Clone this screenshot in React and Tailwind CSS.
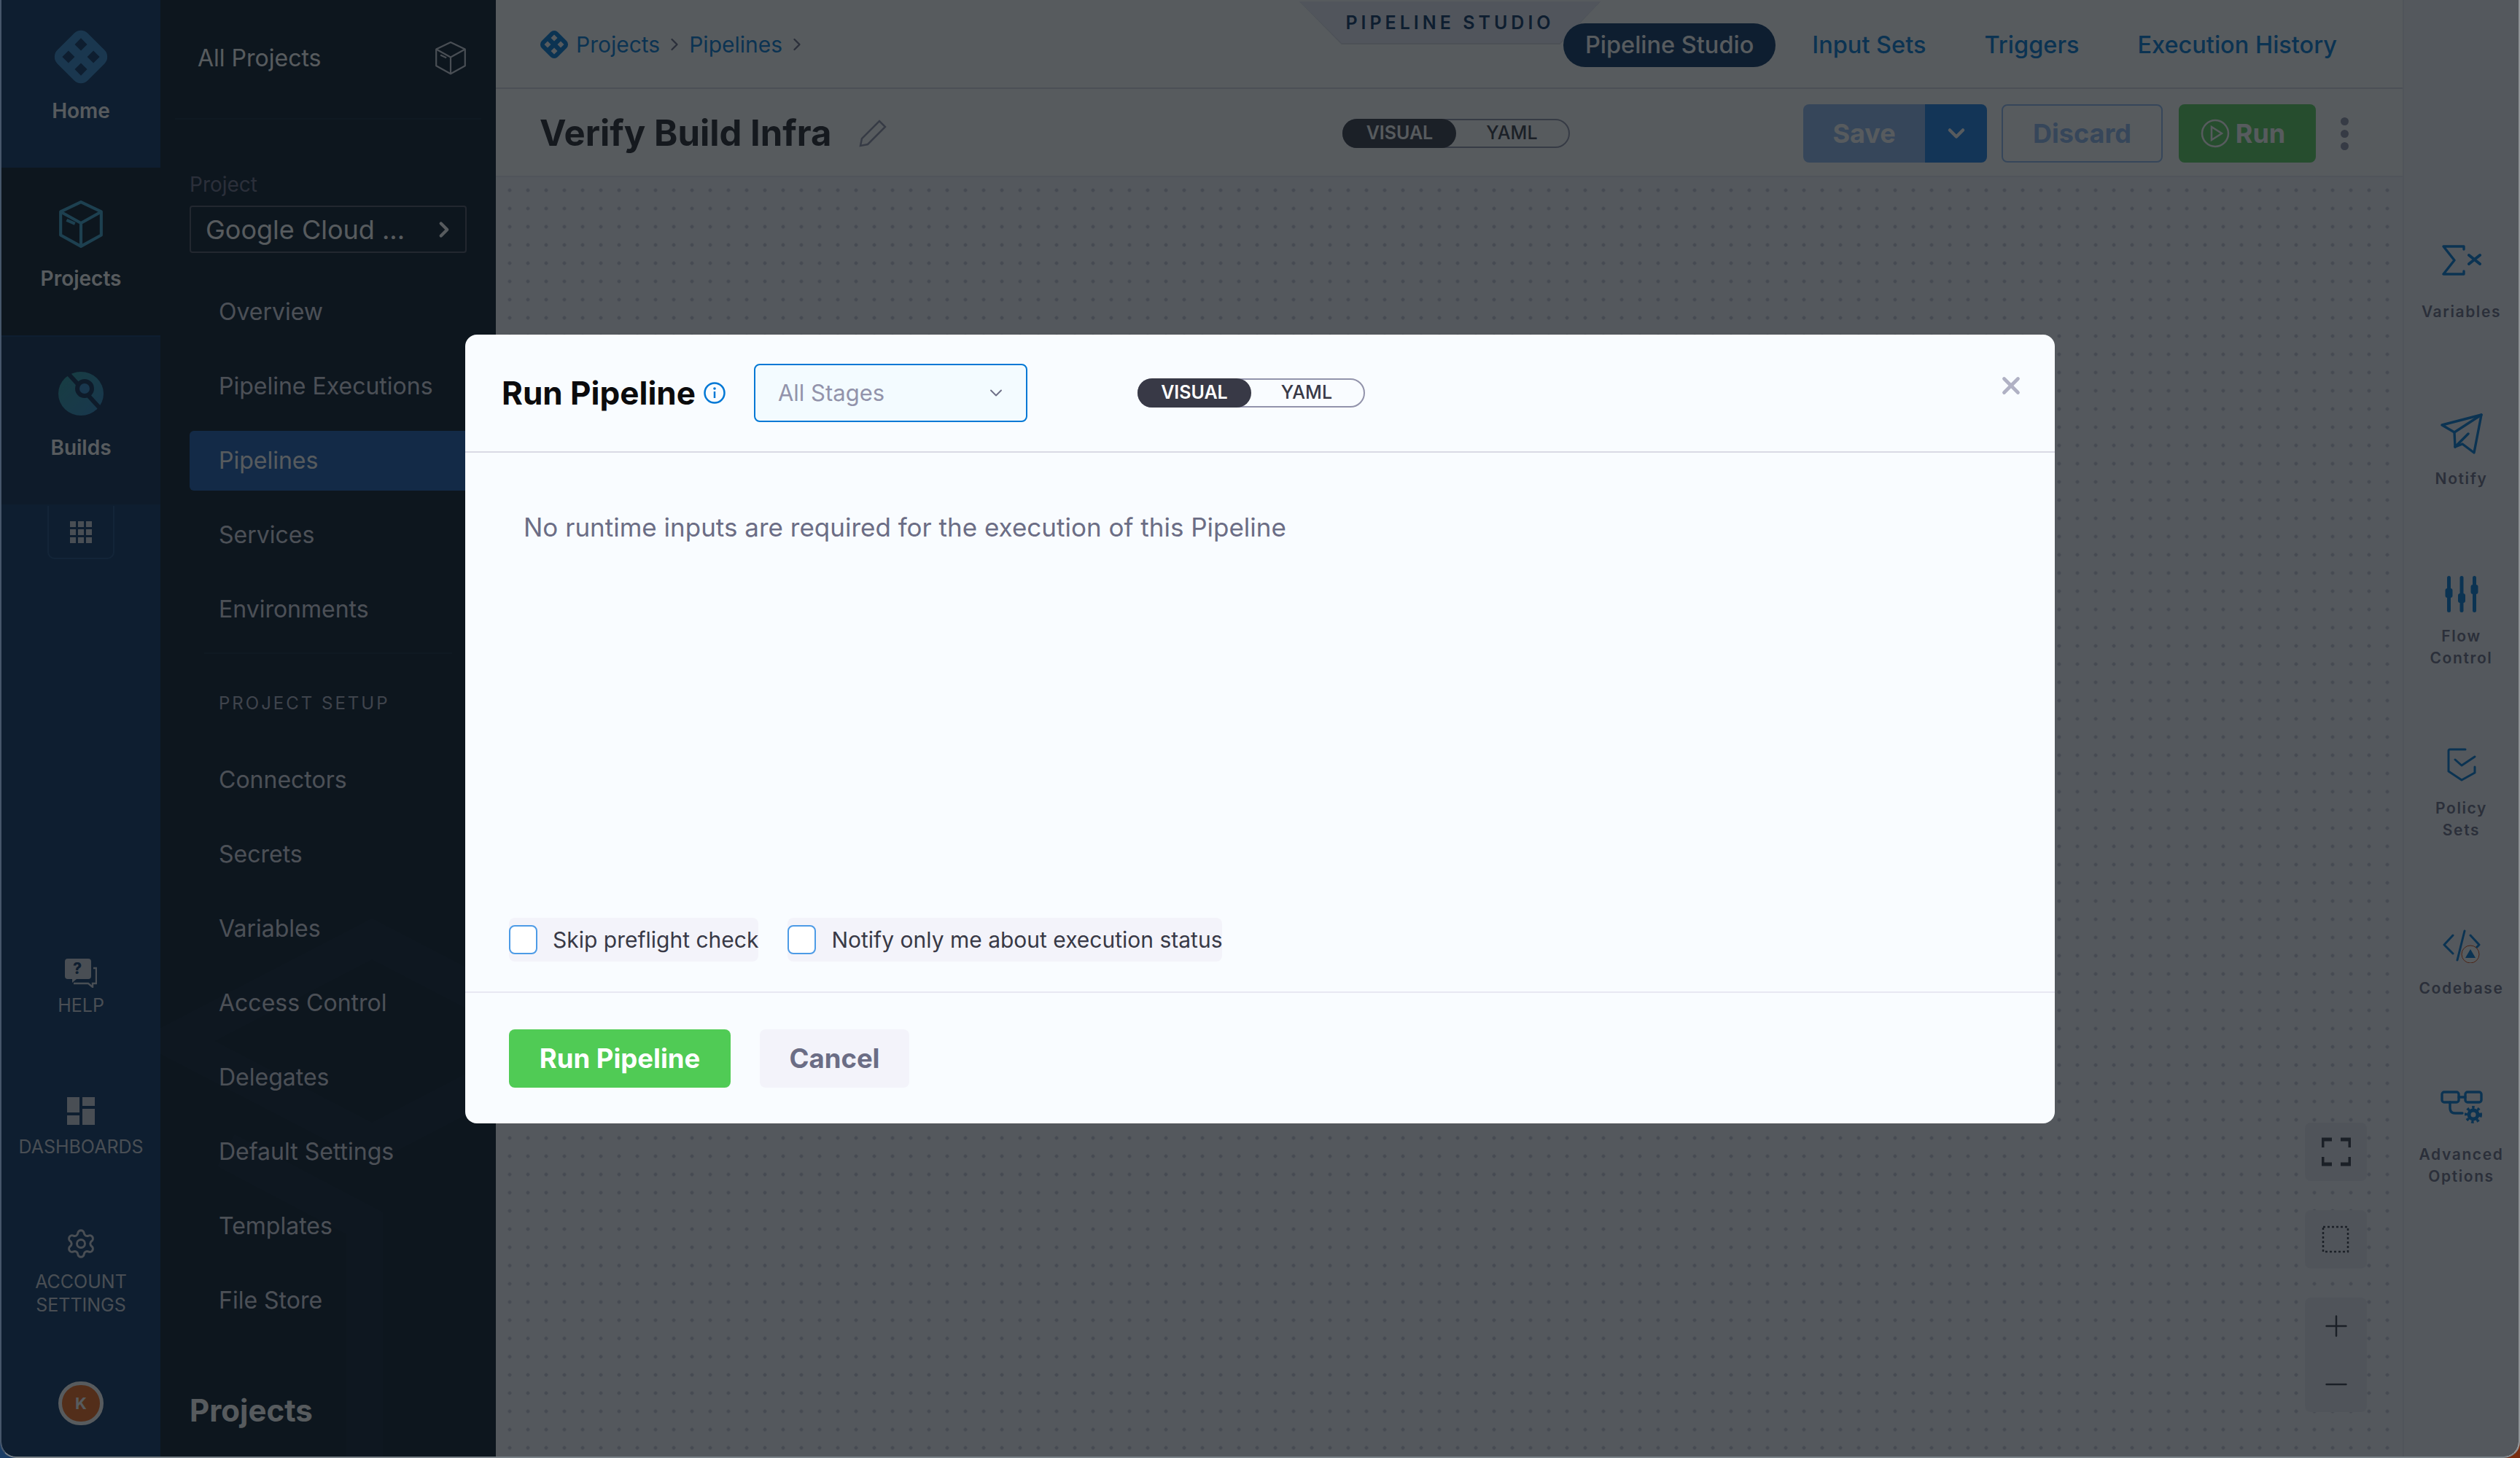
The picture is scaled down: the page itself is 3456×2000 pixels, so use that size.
import { ChevronRight, ChevronDown, Settings, Plus, Minus, X } from "lucide-react";

const NAV_TOP = [
  { label: "Home", cls: "h-[230px] bg-[#0a3364]", icon: <HarnessLogo className="w-[76px] h-[76px] text-[#3488cc]" hole="#0a3364" /> },
  { label: "Projects", cls: "h-[232px] bg-[#07182b] border-b-2 border-[#0a3364]", icon: <CubeIcon className="w-[62px] h-[66px] text-[#3fa5cf]" /> },
  { label: "Builds", cls: "h-[232px] bg-[#0a2a50] border-b-2 border-[#0a3364]", icon: <BuildsIcon className="w-[62px] h-[62px]" /> },
];

const PROJECT_ITEMS = ["Overview", "Pipeline Executions", "Pipelines", "Services", "Environments"];
const SETUP_ITEMS = ["Connectors", "Secrets", "Variables", "Access Control", "Delegates", "Default Settings", "Templates", "File Store"];

const TOOLS = [
  { label: ["Variables"], cls: "h-[231px]", labelCls: "mt-[21px]", icon: <SigmaIcon /> },
  { label: ["Notify"], cls: "h-[223px]", labelCls: "mt-[19px]", icon: <PlaneIcon /> },
  { label: ["Flow", "Control"], cls: "h-[236px]", labelCls: "mt-[12px]", icon: <SlidersIcon /> },
  { label: ["Policy", "Sets"], cls: "h-[249px]", labelCls: "mt-[12px]", icon: <PolicyIcon /> },
  { label: ["Codebase"], cls: "h-[221px]", labelCls: "mt-[10px]", icon: <CodeIcon /> },
  { label: ["Advanced", "Options"], cls: "h-[220px]", labelCls: "mt-[17px]", icon: <AdvancedIcon /> },
];

function HarnessLogo({ className, hole }) {
  return (
    <svg viewBox="0 0 80 80" className={className}>
      <rect x="9" y="9" width="62" height="62" rx="14" transform="rotate(45 40 40)" fill="currentColor" />
      <g fill={hole}>
        <polygon points="40,13 49,22 40,31 31,22" />
        <polygon points="22,31 31,40 22,49 13,40" />
        <polygon points="58,31 67,40 58,49 49,40" />
        <polygon points="40,49 49,58 40,67 31,58" />
      </g>
    </svg>
  );
}

function CubeIcon({ className, width = 4 }) {
  return (
    <svg viewBox="0 0 60 64" fill="none" stroke="currentColor" strokeWidth={width} strokeLinejoin="round" className={className}>
      <path d="M30 2 L57 15 V46 L30 61 L3 46 V15 Z" />
      <path d="M3 15 L30 30 L57 15 M30 30 V61" />
      <path d="M11 26 L22 31" />
    </svg>
  );
}

function BuildsIcon({ className }) {
  return (
    <svg viewBox="0 0 62 62" className={className}>
      <defs>
        <linearGradient id="builds-grad" x1="0" y1="0" x2="1" y2="1">
          <stop offset="0" stopColor="#2a9aa0" />
          <stop offset="1" stopColor="#2f86c8" />
        </linearGradient>
      </defs>
      <ellipse cx="31" cy="31" rx="31" ry="30" fill="url(#builds-grad)" />
      <path d="M14 4 L58 52" stroke="#0a2a50" strokeWidth="6" />
      <circle cx="36" cy="24" r="10" fill="#2f86c8" stroke="#0a2a50" strokeWidth="6" />
    </svg>
  );
}

function HelpIcon() {
  return (
    <svg viewBox="0 0 44 40" className="w-[44px] h-[40px]">
      <path d="M4 0 H32 Q36 0 36 4 V24 Q36 28 32 28 H16 L10 33 V28 H4 Q0 28 0 24 V4 Q0 0 4 0 Z" fill="#cfd3dc" />
      <text x="17" y="21" textAnchor="middle" fontSize="21" fontWeight="800" fontFamily="Inter, sans-serif" fill="#0a3364">?</text>
      <path d="M39 13 H43 V34 H38 V39 L32 34 H12" fill="none" stroke="#cfd3dc" strokeWidth="2.4" />
    </svg>
  );
}

function DashIcon() {
  return (
    <svg viewBox="0 0 38 38" fill="#cfd3dc" className="w-[38px] h-[38px]">
      <rect x="0" y="0" width="17" height="21" />
      <rect x="21" y="0" width="17" height="12" />
      <rect x="0" y="25" width="17" height="13" />
      <rect x="21" y="16" width="17" height="22" />
    </svg>
  );
}

function SigmaIcon() {
  return (
    <svg viewBox="0 0 54 42" fill="none" stroke="currentColor" strokeLinecap="round" strokeLinejoin="round" className="w-[54px] h-[42px] text-[#0278d5]">
      <path d="M30 6 V2 H2 L17 21 L2 40 H30 V36" strokeWidth="3.4" />
      <path d="M37 14 L52 26 M52 14 L37 26" strokeWidth="4" />
    </svg>
  );
}

function PlaneIcon() {
  return (
    <svg viewBox="0 0 58 56" fill="none" stroke="currentColor" strokeWidth="3.4" strokeLinejoin="round" strokeLinecap="round" className="w-[58px] h-[56px] text-[#0278d5]">
      <path d="M2 16 L56 2 L46 54 L30 42 L20 46 L19 26 Z" />
      <path d="M19 26 L56 2 M20 46 L38 28" />
    </svg>
  );
}

function SlidersIcon() {
  return (
    <svg viewBox="0 0 46 50" fill="currentColor" className="w-[46px] h-[50px] text-[#0278d5]">
      <rect x="3" y="0" width="5" height="50" rx="2.5" />
      <rect x="20.5" y="0" width="5" height="50" rx="2.5" />
      <rect x="38" y="0" width="5" height="50" rx="2.5" />
      <rect x="0.5" y="17" width="10" height="13" rx="3" />
      <rect x="18" y="24" width="10" height="13" rx="3" />
      <rect x="35.5" y="12" width="10" height="13" rx="3" />
    </svg>
  );
}

function PolicyIcon() {
  return (
    <svg viewBox="0 0 40 46" fill="none" stroke="currentColor" strokeWidth="3" strokeLinecap="round" strokeLinejoin="round" className="w-[40px] h-[46px] text-[#0278d5]">
      <path d="M25 2 H4 Q2 2 2 4 V32 L20 44 L38 34 V26" />
      <path d="M11 16 L20 24 L38 12" />
    </svg>
  );
}

function CodeIcon() {
  return (
    <svg viewBox="0 0 52 46" fill="none" className="w-[52px] h-[46px] text-[#0278d5]">
      <path d="M14 8 L2 21 L14 33 M38 8 L50 21 L44 27 M30 2 L20 42" stroke="currentColor" strokeWidth="3" strokeLinecap="round" strokeLinejoin="round" />
      <circle cx="38" cy="34" r="12" fill="#fff" stroke="#d9480f" strokeWidth="1" />
      <path d="M38 27 L45 39 H31 Z" fill="currentColor" />
    </svg>
  );
}

function AdvancedIcon() {
  return (
    <svg viewBox="0 0 58 46" fill="none" stroke="currentColor" strokeWidth="3.4" strokeLinecap="round" className="w-[58px] h-[46px] text-[#0278d5]">
      <rect x="2" y="2" width="23" height="14" rx="3" />
      <rect x="34" y="2" width="22" height="14" rx="3" />
      <path d="M25 9 H34 M13 16 V24 Q13 31 20 31 H30" />
      <circle cx="45" cy="33" r="6" strokeWidth="5" />
      <circle cx="45" cy="33" r="10" strokeWidth="4" strokeDasharray="3.5 4" strokeLinecap="butt" />
    </svg>
  );
}

function NavFooterItem({ icon, lines, cls, labelCls }) {
  return (
    <div className={`flex flex-col items-center ${cls}`}>
      <div className="flex items-center h-[42px]">{icon}</div>
      <div className={`text-[25px] leading-[32px] text-[#cfd3dc] text-center uppercase ${labelCls}`}>
        {lines.map((l) => <div key={l}>{l}</div>)}
      </div>
    </div>
  );
}

function LeftNav() {
  return (
    <nav className="w-[218px] shrink-0 bg-[#0a3364] flex flex-col">
      {NAV_TOP.map((n) => (
        <div key={n.label} className={`flex flex-col items-center ${n.cls} pt-[40px] box-border`}>
          <div className="h-[76px] flex items-center">{n.icon}</div>
          <div className="mt-[20px] text-[28px] leading-[32px] font-semibold text-white">{n.label}</div>
        </div>
      ))}
      <div className="mx-auto w-[92px] h-[73px] border-2 border-t-0 border-[#1d4a80] rounded-b-[10px] flex items-center justify-center">
        <div className="grid grid-cols-3 gap-[3px]">
          {[0, 1, 2, 3, 4, 5, 6, 7, 8].map((i) => <span key={i} className="w-[8px] h-[8px] bg-[#cfd3dc]" />)}
        </div>
      </div>
      <div className="mt-[547px] flex flex-col">
        <NavFooterItem icon={<HelpIcon />} lines={["Help"]} cls="h-[189px]" labelCls="mt-[7px]" />
        <NavFooterItem icon={<DashIcon />} lines={["Dashboards"]} cls="h-[182px]" labelCls="mt-[12px]" />
        <NavFooterItem icon={<Settings size={44} strokeWidth={1.6} className="text-[#cfd3dc]" />} lines={["Account", "Settings"]} cls="h-[210px]" labelCls="mt-[15px]" />
        <div className="mx-auto w-[62px] h-[60px] rounded-full border-[5px] border-white bg-[#f26a1b] flex items-center justify-center text-[22px] font-bold text-white">K</div>
      </div>
    </nav>
  );
}

function SideItem({ label, active }) {
  return (
    <div className={`h-[82px] mb-[20px] ml-[40px] pl-[40px] flex items-center text-[32px] rounded-l-[6px] ${active ? "bg-[#1b5db1] text-white" : "text-[#d9dae5]"}`}>
      {label}
    </div>
  );
}

function ProjectSidebar() {
  return (
    <aside className="relative w-[460px] shrink-0 bg-[#07182b] overflow-hidden">
      <svg viewBox="0 0 460 800" fill="none" stroke="#ffffff" strokeOpacity="0.025" strokeWidth="50" className="absolute left-0 bottom-0 w-[460px] h-[800px]">
        <path d="M20 230 L290 90 L560 230 L290 370 Z" />
        <path d="M90 380 L280 480 V800" />
      </svg>
      <div className="relative">
        <div className="h-[164px] mx-[20px] border-b-2 border-[#0e2338] flex items-start justify-between">
          <span className="mt-[60px] ml-[31px] text-[32px] leading-[40px] text-[#fff]">All Projects</span>
          <CubeIcon className="mt-[56px] mr-[20px] w-[44px] h-[48px] text-[#cfd3dc]" width={3} />
        </div>
        <div className="ml-[40px] mt-[73px] text-[28px] leading-[32px] text-[#6b6d85]">Project</div>
        <div className="ml-[40px] mr-[40px] mt-[13px] h-[65px] border-2 border-[#4f5162] rounded-[4px] flex items-center justify-between pl-[20px] pr-[12px] box-border">
          <span className="text-[36px] text-white">Google Cloud ...</span>
          <ChevronRight size={34} strokeWidth={3} className="text-white" />
        </div>
        <div className="mt-[40px]">
          {PROJECT_ITEMS.map((i) => <SideItem key={i} label={i} active={i === "Pipelines"} />)}
        </div>
        <div className="mx-[60px] h-[2px] bg-[#0e2338] -mt-[2px]" />
        <div className="ml-[80px] mt-[48px] mb-[44px] text-[24px] leading-[40px] tracking-[3px] text-[#b0b1c4]">PROJECT SETUP</div>
        {SETUP_ITEMS.map((i) => <SideItem key={i} label={i} />)}
        <div className="ml-[40px] mt-[85px] text-[42px] leading-[50px] font-bold text-white">Projects</div>
      </div>
    </aside>
  );
}

function ModeToggle() {
  return (
    <div className="flex items-stretch h-[40px] w-[312px] rounded-full border-2 border-[#9293ab] box-border">
      <div className="w-[156px] -m-[2px] h-[40px] rounded-full bg-[#383946] flex items-center justify-center text-[25px] font-semibold text-white">VISUAL</div>
      <div className="flex-1 flex items-center justify-center text-[25px] font-medium text-[#383946]">YAML</div>
    </div>
  );
}

function TopBar() {
  return (
    <header className="relative h-[122px] shrink-0 border-b-2 border-[#d9dae5] flex items-center justify-between pl-[60px] pr-[90px] box-border">
      <div className="flex items-center text-[30px] text-[#0278d5] pt-[2px]">
        <HarnessLogo className="w-[40px] h-[40px] mr-[10px] text-[#0278d5]" hole="#ffffff" />
        <span>Projects</span>
        <ChevronRight size={28} className="mx-[6px] text-[#6b6d85]" />
        <span>Pipelines</span>
        <ChevronRight size={28} className="ml-[6px] text-[#6b6d85]" />
      </div>
      <div className="absolute left-[1102px] top-[2px] w-[413px] h-[59px] bg-[#d9dae5] [clip-path:polygon(0_0,100%_0,86.5%_100%,14%_100%)]">
        <div className="w-[413px] h-[57px] bg-[#e9ebf7] [clip-path:polygon(0_0,100%_0,86.5%_100%,14%_100%)] flex items-center justify-center text-[25px] font-semibold tracking-[5px] text-[#0a3364] pt-[2px]">PIPELINE STUDIO</div>
      </div>
      <div className="relative mt-[4px] flex items-center text-[32.5px] font-medium text-[#0278d5]">
        <div className="h-[60px] px-[30px] rounded-full bg-[#0a3364] text-white flex items-center">Pipeline Studio</div>
        <span className="ml-[50px]">Input Sets</span>
        <span className="ml-[80px]">Triggers</span>
        <span className="ml-[80px]">Execution History</span>
      </div>
    </header>
  );
}

function TitleBar() {
  return (
    <div className="h-[121px] shrink-0 border-b-2 border-[#e8e8f2] flex items-center pt-[3px] pl-[60px] pr-[74px] box-border">
      <span className="text-[49px] font-bold text-[#22222a]">Verify Build Infra</span>
      <svg viewBox="0 0 38 38" fill="none" stroke="#9293ab" strokeWidth="2.5" className="ml-[38px] w-[38px] h-[38px]">
        <path d="M2 36 L4 26 L28 2 L36 10 L12 34 Z" />
      </svg>
      <div className="ml-[625px]"><ModeToggle /></div>
      <div className="ml-auto flex items-center">
        <div className="w-[167px] h-[80px] rounded-l-[8px] bg-[#92b9f0] flex items-center justify-center text-[36px] font-bold text-white">Save</div>
        <div className="w-[85px] h-[80px] rounded-r-[8px] bg-[#1b7fe8] flex items-center justify-center">
          <ChevronDown size={36} strokeWidth={3} className="text-white" />
        </div>
        <div className="ml-[20px] w-[221px] h-[80px] rounded-[8px] border-2 border-[#92b9f0] flex items-center justify-center text-[36px] font-bold text-[#92b9f0] box-border">Discard</div>
        <div className="ml-[22px] w-[188px] h-[80px] rounded-[8px] bg-[#5ad05e] flex items-center justify-center gap-[8px] pr-[12px] text-[36px] font-bold text-white box-border">
          <svg viewBox="0 0 40 40" fill="none" stroke="currentColor" strokeWidth="2.5" className="w-[40px] h-[40px]">
            <circle cx="20" cy="20" r="18" />
            <path d="M15 11 L29 20 L15 29 Z" />
          </svg>
          Run
        </div>
        <div className="ml-[34px] flex flex-col gap-[6px]">
          <span className="w-[11px] h-[11px] rounded-full bg-[#9293ab]" />
          <span className="w-[11px] h-[11px] rounded-full bg-[#9293ab]" />
          <span className="w-[11px] h-[11px] rounded-full bg-[#9293ab]" />
        </div>
      </div>
    </div>
  );
}

function Canvas() {
  return (
    <div className="relative flex-1 bg-[#f3f3fa] bg-[radial-gradient(circle,#c4c5d6_2px,transparent_2.5px)] bg-[size:25px_25px] bg-[position:6.5px_5.5px]">
      <div className="absolute left-[2481px] top-[1297px] flex flex-col gap-[40px]">
        <div className="w-[85px] h-[80px] rounded-[8px] bg-[#e8e8f2] flex items-center justify-center">
          <svg viewBox="0 0 40 40" fill="none" stroke="#383946" strokeWidth="5" className="w-[40px] h-[40px]">
            <path d="M1 14 V3 H14 M26 3 H39 V14 M39 27 V37 H26 M14 37 H1 V27" />
          </svg>
        </div>
        <div className="w-[85px] h-[80px] rounded-[8px] bg-[#e8e8f2] flex items-center justify-center">
          <svg viewBox="0 0 40 40" fill="none" stroke="#383946" strokeWidth="2.5" strokeDasharray="3 3" className="w-[40px] h-[40px]">
            <rect x="2" y="3" width="34" height="34" />
          </svg>
        </div>
        <div className="w-[85px] h-[157px] rounded-[8px] bg-[#e8e8f2] flex flex-col items-center justify-center gap-[34px]">
          <Plus size={46} strokeWidth={1.3} className="text-[#383946]" />
          <Minus size={46} strokeWidth={1.3} className="text-[#383946]" />
        </div>
      </div>
    </div>
  );
}

function ToolPanel() {
  return (
    <aside className="flex-1 border-l-2 border-[#e8e8f2] bg-[#f6f6fb] pt-[336px] box-border">
      {TOOLS.map((t) => (
        <div key={t.label[0]} className={`flex flex-col items-center ${t.cls}`}>
          <div className="h-[56px] flex items-start">{t.icon}</div>
          <div className={`text-center text-[21px] leading-[30px] font-semibold tracking-[1.6px] text-[#6b6d85] ${t.labelCls}`}>
            {t.label.map((l) => <div key={l}>{l}</div>)}
          </div>
        </div>
      ))}
    </aside>
  );
}

function RunModal() {
  return (
    <div className="w-[2180px] h-[1082px] mt-[2px] bg-[#f9fcff] rounded-[16px] flex flex-col relative">
      <div className="h-[162px] shrink-0 border-b-2 border-[#d9dae5] flex items-center pl-[50px] box-border">
        <h1 className="text-[44px] font-bold text-[#0b0b0d]">Run Pipeline</h1>
        <svg viewBox="0 0 30 30" fill="none" className="ml-[11px] w-[30px] h-[30px] text-[#0278d5]">
          <circle cx="15" cy="15" r="13.5" stroke="currentColor" strokeWidth="2.5" />
          <circle cx="15" cy="9" r="1.8" fill="currentColor" />
          <path d="M15 13 V22" stroke="currentColor" strokeWidth="2.5" />
        </svg>
        <div className="ml-[39px] w-[375px] h-[80px] rounded-[8px] border-2 border-[#0278d5] bg-[#f3fbff] flex items-center justify-between pl-[31px] pr-[27px] box-border">
          <span className="text-[31px] text-[#9293ab]">All Stages</span>
          <ChevronDown size={28} strokeWidth={1.6} className="text-[#6b6d85]" />
        </div>
        <div className="ml-[151px]"><ModeToggle /></div>
        <X size={38} strokeWidth={3} className="absolute left-[2101px] top-[51px] text-[#b0b1c4]" />
      </div>
      <div className="flex-1 pt-[78px] pl-[80px] text-[35px] leading-[48px] text-[#6b6d85]">
        No runtime inputs are required for the execution of this Pipeline
      </div>
      <div className="pl-[60px] pb-[41px] flex gap-[40px] text-[30px] text-[#383946]">
        <label className="h-[60px] bg-[#f3f3fa] rounded-[8px] flex items-center">
          <span className="w-[39px] h-[40px] rounded-[8px] bg-white border-2 border-[#4d9be6] mr-[21px] box-border" />
          Skip preflight check
        </label>
        <label className="h-[60px] bg-[#f3f3fa] rounded-[8px] flex items-center">
          <span className="w-[39px] h-[40px] rounded-[8px] bg-white border-2 border-[#4d9be6] mr-[21px] box-border" />
          Notify only me about execution status
        </label>
      </div>
      <div className="h-[181px] shrink-0 border-t-2 border-[#e8e8f2] pt-[50px] pl-[60px] flex gap-[40px] box-border">
        <button className="w-[304px] h-[80px] rounded-[8px] bg-[#50cb55] text-white text-[36.5px] font-bold">Run Pipeline</button>
        <button className="w-[205px] h-[80px] rounded-[8px] bg-[#f3f3fa] text-[#6b6d85] text-[36.5px] font-bold">Cancel</button>
      </div>
    </div>
  );
}

export default function App() {
  return (
    <div className="w-[3456px] h-[2000px] overflow-hidden bg-[linear-gradient(90deg,#1a3d66,#7a2e10)] [font-family:Inter,'Noto_Sans',sans-serif]">
      <div className="relative flex w-[3456px] h-[2000px] rounded-b-[22px] overflow-hidden border-x-2 border-b-2 border-l-[#46566a] border-r-[#8f9396] border-b-[#7a8288] bg-white box-border">
        <LeftNav />
        <ProjectSidebar />
        <div className="flex-1 flex min-w-0">
          <main className="w-[2615px] shrink-0 flex flex-col bg-white">
            <TopBar />
            <TitleBar />
            <Canvas />
          </main>
          <ToolPanel />
        </div>
        <div className="absolute inset-0 bg-[rgba(16,22,26,0.7)] flex items-center justify-center">
          <RunModal />
        </div>
      </div>
    </div>
  );
}
